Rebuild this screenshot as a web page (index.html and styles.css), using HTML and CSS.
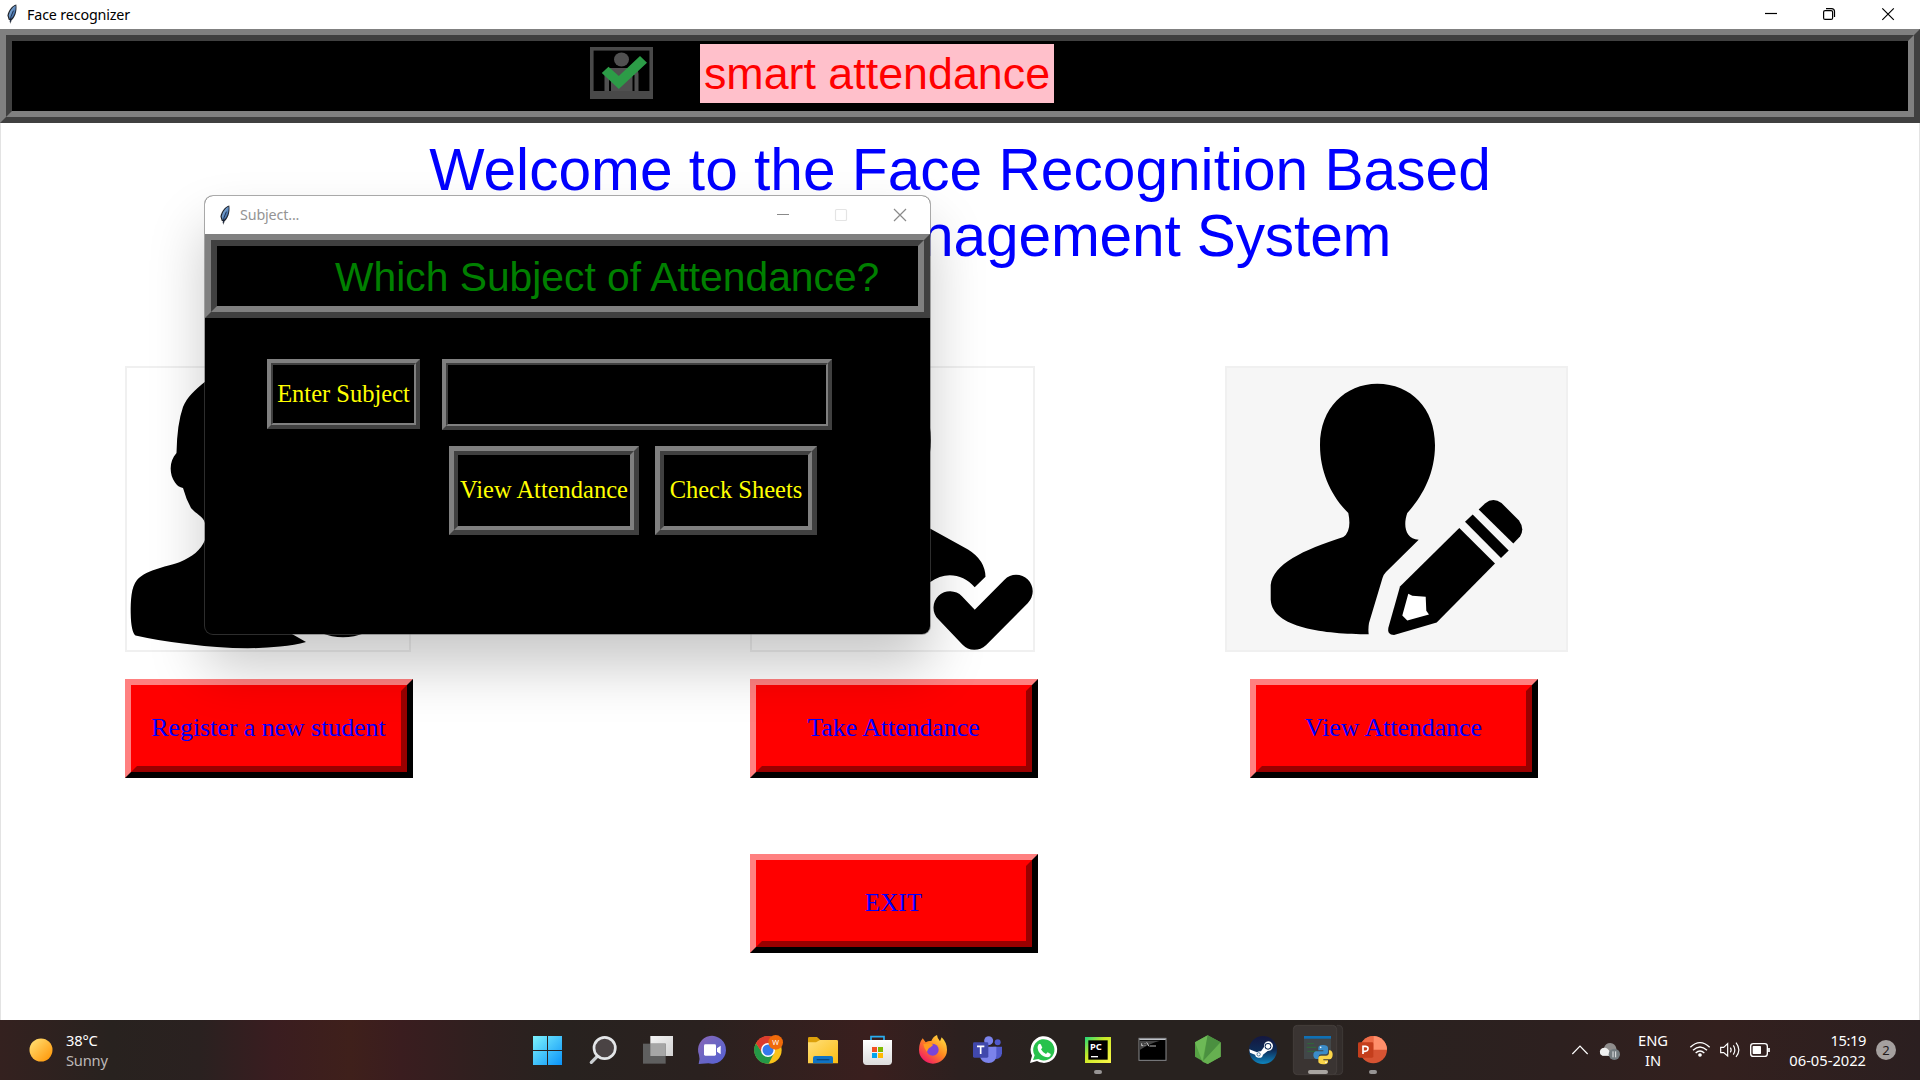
FILE: index.html
```
<!DOCTYPE html>
<html lang="en">
<head>
<meta charset="utf-8">
<title>Face recognizer</title>
<link rel="stylesheet" href="styles.css">
</head>
<body>
<svg width="0" height="0" class="defs" aria-hidden="true">
  <defs>
    <linearGradient id="win" x1="0" y1="0" x2="1" y2="1"><stop offset="0" stop-color="#7df3fd"/><stop offset="1" stop-color="#0a93f8"/></linearGradient>
    <linearGradient id="feather-fill" x1="0" y1="0" x2="1" y2="1"><stop offset="0" stop-color="#a6cdf0"/><stop offset="1" stop-color="#1f4f93"/></linearGradient>
    <linearGradient id="sun" x1="0" y1="0" x2="1" y2="1"><stop offset="0" stop-color="#ffe47a"/><stop offset="1" stop-color="#ff9100"/></linearGradient>
    <linearGradient id="chat" x1="0" y1="0" x2="1" y2="1"><stop offset="0" stop-color="#8b66b8"/><stop offset=".5" stop-color="#6a66c4"/><stop offset="1" stop-color="#5560d8"/></linearGradient>
    <linearGradient id="folder" x1="0" y1="0" x2="1" y2="1"><stop offset="0" stop-color="#ffdf7a"/><stop offset="1" stop-color="#fbbd12"/></linearGradient>
    <linearGradient id="fox" x1="1" y1="0" x2=".2" y2="1"><stop offset="0" stop-color="#fff04a"/><stop offset=".5" stop-color="#ff8a1f"/><stop offset="1" stop-color="#f0106c"/></linearGradient>
    <linearGradient id="steam" x1="0" y1="0" x2="0" y2="1"><stop offset="0" stop-color="#14173f"/><stop offset=".5" stop-color="#0e2a55"/><stop offset="1" stop-color="#0e86c0"/></linearGradient>
    <linearGradient id="pycharm" x1="0" y1="0" x2="1" y2="1"><stop offset="0" stop-color="#1fd97c"/><stop offset=".4" stop-color="#c8e825"/><stop offset="1" stop-color="#fcf84a"/></linearGradient>
    <linearGradient id="bag" x1="0" y1="0" x2="0" y2="1"><stop offset="0" stop-color="#ffffff"/><stop offset="1" stop-color="#dcdcdc"/></linearGradient>
    <linearGradient id="pane" x1="0" y1="0" x2="1" y2="1"><stop offset="0" stop-color="#f4f4f4"/><stop offset="1" stop-color="#d2d2d2"/></linearGradient>
    <symbol id="feather" viewBox="0 0 12 22">
      <path d="M10.500 .5C6 1.500 2.400 6.500 1.200 12L2.500 16.500 4 17 4.500 21 5.500 17C9 14.500 11.500 8 10.500 .5Z" fill="#20242c"/>
      <path d="M9.800 1.500C6.500 3 3.500 7.500 2.500 12L3.500 15.500 5 15.500C8.200 13 10.300 7 9.800 1.500Z" fill="url(#feather-fill)"/>
      <path d="M4 19L5 13 7.500 7" fill="none" stroke="#14213a" stroke-width=".9"/>
    </symbol>
  </defs>
</svg>

<div class="desktop">
  <div class="titlebar">
    <svg class="feather"><use href="#feather"/></svg>
    <span class="title-text">Face recognizer</span>
    <svg class="win-controls" viewBox="0 0 180 29" width="180" height="29" fill="none" stroke="#000" stroke-width="1.200">
      <path d="M25 13.500h12"/>
      <rect x="83.600" y="10.600" width="9" height="8.800" rx="1.500"/>
      <path d="M86 8.600h5.500a3 3 0 0 1 3 3V17"/>
      <path d="M142.300 8.300l11.500 11.500M153.800 8.300l-11.500 11.500"/>
    </svg>
  </div>

  <div class="ridge banner">
    <div class="ridge-inner">
      <svg class="logo" viewBox="0 0 63 52">
        <rect x="1.800" y="1.800" width="59.400" height="48.400" fill="none" stroke="#494949" stroke-width="3.600"/>
        <rect x="2" y="44" width="59" height="7" fill="#494949"/>
        <ellipse cx="31.500" cy="12.500" rx="7.500" ry="7" fill="#505050"/>
        <path d="M14.500 44V27Q14.500 21 20 21H42Q48.500 21 48.500 27V44H44.500V28H42.500V44H21V28H19V44Z" fill="#505050"/>
        <path d="M11.800 26L18.500 19.800 28.800 29 50 9 57 15.800 28.800 42Z" fill="#2c9c47"/>
      </svg>
      <div class="brand">smart attendance</div>
    </div>
  </div>

  <main class="content">
    <h1 class="welcome">Welcome to the Face Recognition Based<br><span class="welcome-second">Attendance Management System</span></h1>

    <div class="cards">
      <div class="card">
        <svg class="photo" viewBox="0 0 286 286" width="286" height="286">
          <path d="M200 60C180 0 110 -5 80 15.700C70 24 62 31 58 41Q52 58 51.500 87C44 95 44 108 50 116.500Q53 121 58 122Q61 133 66 142C71 148 78 150 80 157V174C76 184 67 191 55 196C45 200 22 203 12 214C6 221 5.700 235 5.700 247Q6 266 10.500 269.500Q35 275 58 277.500Q115 285 155 280.500Q170 279 181 276L167 268 200 200Z"/>
          <path d="M196 267Q218 275.500 240 267L218 240Z"/>
        </svg>
        <button class="big-button"><span>Register a new student</span></button>
      </div>
      <div class="card take">
        <svg class="photo" viewBox="0 0 285 286" width="285" height="286">
          <ellipse cx="120" cy="74" rx="61" ry="68"/>
          <path d="M30 200L150 146 180 162.500 218 183.500Q235 194 235.500 210.700L224.700 221.300C213 208 195 205 180 216.300L150 240H30Z"/>
          <path d="M200 241.700L224.500 267.300 266.200 225.300" fill="none" stroke="#000" stroke-width="33" stroke-linecap="round" stroke-linejoin="round"/>
        </svg>
        <button class="big-button"><span>Take Attendance</span></button>
      </div>
      <div class="card view">
        <svg class="photo grey" viewBox="0 0 343 286" width="343" height="286">
          <path d="M152.300 17.700C186 18 210 42 210 79.300C210 108 197 131 182.300 147C178 159 180 173 193.700 173.700L161 206Q158.500 208.500 157.500 212L144 257Q143 263 143.700 268.300C100 268 47 262 45.700 233.700V219C48 198 78 184 118.300 171Q127 165 123.300 147C106 130 95 106 95 79.300C95 42 120 18 152.300 17.700Z"/>
          <path d="M234.300 162L270 197.400 211.700 256.400 169 269Q162 269 163.300 262L175 220.400Z"/>
          <path d="M183.300 227.700L177.300 249.400 182.300 254.400 204 248.400 201.300 244.700 200.700 230.700 187.300 229.700Z" fill="#fff"/>
          <path d="M247.700 148.400L283.700 184.400 276 192 240 155.700Z"/>
          <path d="M253.700 143.400L260 137.500Q268 131 276.500 137L294 154.500Q300 163 295 170.400L288.300 177.400Z"/>
        </svg>
        <button class="big-button"><span>View Attendance</span></button>
      </div>
    </div>
    <button class="big-button exit"><span>EXIT</span></button>
  </main>

  <footer class="taskbar">
    <div class="weather">
      <svg width="24" height="24" viewBox="0 0 24 24"><circle cx="12" cy="12" r="11.500" fill="url(#sun)"/></svg>
      <div class="weather-text"><div>38°C</div><div class="muted">Sunny</div></div>
    </div>
    <div class="apps">
      <svg viewBox="60 30 165 180"><path d="M99 78h42v42H99zM144 78h42v42h-42zM99 123h42v42H99zM144 123h42v42h-42z" fill="url(#win)"/></svg>
      <svg viewBox="225 30 165 180"><path d="M274 157L291 140" stroke="#c9cdd0" stroke-width="10" stroke-linecap="round"/><circle cx="314" cy="114" r="32" fill="#4a4344" stroke="#e4e6e8" stroke-width="8"/></svg>
      <svg viewBox="390 30 165 180"><rect x="451" y="78" width="68" height="60" fill="url(#pane)"/><rect x="429" y="101" width="68" height="60" fill="#5f5f5f"/><rect x="451" y="101" width="46" height="37" fill="#a6a6a6"/></svg>
      <svg viewBox="555 30 165 180"><path d="M596 162Q601 148 597 135A42 42 0 1 1 625 160Z" fill="url(#chat)"/><rect x="612" y="103" width="36" height="34" rx="4" fill="#fff"/><path d="M651 115L662 107V133L651 125Z" fill="#fff"/></svg>
      <svg viewBox="720 30 165 180"><circle cx="804" cy="120" r="41" fill="#f9c21a"/><path d="M768 99.500A41 41 0 0 0 806 161L822 130 804 120 787 128Z" fill="#249847"/><path d="M768 99.500A41 41 0 0 1 840 99.500L842 104H804L787 130Z" fill="#dc3b2e"/><circle cx="804" cy="120" r="21" fill="#fff"/><circle cx="804" cy="120" r="16.500" fill="#3579ec"/><circle cx="827" cy="97" r="22" fill="#f06a0a"/><text x="827" y="105" class="w-badge">W</text></svg>
      <svg viewBox="885 30 165 180"><path d="M924 85Q924 81 928 81H951L961 90V104H924Z" fill="#dca00a"/><path d="M924 97H948L960 90H1010Q1014 90 1014 94V160H924Z" fill="url(#folder)"/><path d="M939 160V144Q939 138 945 138H993Q999 138 999 144V160Z" fill="#0f73c4"/><path d="M950 149H988" stroke="#07477f" stroke-width="4"/></svg>
      <svg viewBox="1050 30 165 180"><path d="M1113 94V80H1152V94" fill="none" stroke="#29aef0" stroke-width="5"/><path d="M1089 90H1176V154Q1176 165 1165 165H1100Q1089 165 1089 154Z" fill="url(#bag)"/><path d="M1116 111h15v15h-15z" fill="#f25022"/><path d="M1134 111h15v15h-15z" fill="#7fba00"/><path d="M1116 129h15v15h-15z" fill="#00a4ef"/><path d="M1134 129h15v15h-15z" fill="#ffb900"/></svg>
      <svg viewBox="1215 30 165 180"><path d="M1268 85L1277 97Q1286 92 1294 93 1299 80 1311 75 1312 86 1320 94L1325 82Q1341 98 1341 119A42 42 0 0 1 1257 119Q1257 99 1268 85Z" fill="url(#fox)"/><circle cx="1298" cy="119" r="18" fill="#7a44d8"/><path d="M1270 103Q1286 97 1300 104L1292 112Q1284 114 1281 126 1272 116 1270 103Z" fill="#ff9a1e"/></svg>
      <svg viewBox="60 30 165 180"><circle cx="146" cy="92" r="13.500" fill="#7b83eb"/><circle cx="173" cy="97" r="9" fill="#5059c9"/><path d="M160 110H186V130Q184 146 168 147H160Z" fill="#5059c9"/><path d="M120 110H169V138Q167 158 146 159 124 158 120 140Z" fill="#7b83eb"/><rect x="99" y="97" width="46" height="46" rx="4" fill="#4048ac"/><path d="M111 109H133M122 109V132" stroke="#fff" stroke-width="5"/></svg>
      <svg viewBox="225 30 165 180"><path d="M270 159L276 137A40 40 0 1 1 291 153Z" fill="#fff"/><path d="M279 150L284 136A32 32 0 1 1 295 147Z" fill="#27c24c"/><path d="M296 103Q300 99 303 104L307 113 303 118Q308 128 318 132L323 127 332 132Q333 139 324 142 310 142 299 129 288 114 296 103Z" fill="#fff"/></svg>
      <svg viewBox="390 30 165 180"><rect x="435" y="81" width="78" height="78" fill="url(#pycharm)"/><rect x="445" y="91" width="58" height="58" fill="#000"/><text x="450" y="119" class="pc-letters">PC</text><path d="M453 140H474" stroke="#fff" stroke-width="4"/><rect x="462" y="180" width="24" height="12" rx="6" fill="#979494"/></svg>
      <svg viewBox="555 30 165 180"><rect x="597" y="85" width="81" height="66" fill="#000" stroke="#87898c" stroke-width="3"/><path d="M598 88H677" stroke="#bfc3c8" stroke-width="4"/><path d="M599 92H660Q625 102 599 120Z" fill="#434343"/><path d="M605 100V107H610M615 99V101M615 105V107M620 97L627 109M629 108H648" fill="none" stroke="#ddd" stroke-width="2.500"/></svg>
      <svg viewBox="720 30 165 180"><path d="M803 76L842 97V140L803 162 765 140V97Z" fill="#56a244"/><path d="M803 76L765 97 787 155Z" fill="#6db956"/><path d="M803 76L842 97 790 155Z" fill="#4b9040"/><path d="M842 97V140L803 162 787 155Z" fill="#66b050"/></svg>
      <svg viewBox="885 30 165 180"><circle cx="969" cy="120" r="42" fill="url(#steam)"/><path d="M928 118L951 127Q957 123 963 124L972 111Q971 95 985 94 999 95 999 109 998 122 983 123L969 134Q966 146 954 143 946 141 945 134L930 128Z" fill="#fff"/><circle cx="984" cy="109" r="10" fill="#0e2a55"/><circle cx="984" cy="109" r="7" fill="#fff"/><circle cx="956" cy="133" r="5" fill="none" stroke="#174c78" stroke-width="2"/></svg>
      <svg viewBox="1050 30 165 180"><path d="M1190 46H1196Q1208 46 1208 58V182Q1208 194 1196 194H1182" fill="#332d2b" stroke="#474140" stroke-width="2"/><rect x="1060" y="46" width="130" height="148" rx="12" fill="#3a3432" stroke="#4b4543" stroke-width="2"/><rect x="1092" y="78" width="81" height="69" fill="#424749"/><path d="M1092 82H1173" stroke="#0f70b5" stroke-width="8"/><path d="M1102 101H1122M1100 112H1128M1102 124H1130" stroke="#2f6a38" stroke-width="3"/><path d="M1150 105Q1136 104 1135 113V121H1150V124H1129Q1120 125 1120 136 1121 147 1130 147H1136V139Q1136 133 1144 133H1158Q1164 132 1164 126V113Q1163 105 1150 105Z" fill="#3b8cc8"/><path d="M1149 163Q1134 162 1135 154V145Q1135 137 1143 137H1158Q1167 136 1167 128V121H1170Q1178 123 1178 134 1177 147 1169 148H1150V151H1164V156Q1163 163 1149 163Z" fill="#fbd548"/><circle cx="1142" cy="112" r="2.500" fill="#fff"/><circle cx="1158" cy="157" r="2.500" fill="#fff"/><rect x="1104" y="180" width="60" height="12" rx="6" fill="#a9a5a1"/></svg>
      <svg viewBox="1215 30 165 180"><circle cx="1300" cy="119" r="41" fill="#d65332"/><path d="M1300 78A41 41 0 0 1 1341 119H1300Z" fill="#ff8f6b"/><path d="M1300 78V119H1259A41 41 0 0 1 1300 78Z" fill="#ed6c47"/><rect x="1254" y="97" width="46" height="46" rx="4" fill="#c43e1c"/><path d="M1269 132V109H1277Q1285 110 1284 117 1283 124 1275 124H1269" fill="none" stroke="#fff" stroke-width="5"/><rect x="1287" y="180" width="24" height="12" rx="6" fill="#979494"/></svg>
    </div>
    <div class="tray">
      <svg viewBox="75 30 180 180" width="60" height="60"><path d="M97 132L120 108 143 132" fill="none" stroke="#fff" stroke-width="3.500"/><path d="M188 137Q179 135 180 124 182 115 192 114 196 99 211 99 225 100 229 115V137Z" fill="#8f8d8c"/><path d="M188 137Q179 135 180 124 182 112 196 113 207 115 214 137Z" fill="#f0f0f0"/><circle cx="223" cy="133" r="17" fill="#747c80"/><path d="M219 124V142M227 124V142" stroke="#fff" stroke-width="2.500"/></svg>
      <div class="lang"><div>ENG</div><div>IN</div></div>
      <svg viewBox="423 30 282 180" width="94" height="60" fill="none" stroke="#fff" stroke-width="4"><path d="M451 112Q480 84 509 112M459 121Q480 101 501 121M467 129Q480 117 493 129"/><circle cx="480" cy="135" r="3.500" fill="#fff"/><path d="M542 112H551L563 101V138L551 128H542Z" stroke-width="3.500"/><path d="M571 113Q576 120 571 127M580 106Q589 120 580 134M588 98Q605 120 588 141" stroke-width="3.500"/><rect x="632" y="101" width="50" height="38" rx="8"/><rect x="638" y="108" width="25" height="24" rx="2" fill="#fff" stroke="none"/><path d="M687 114V126" stroke-width="5"/></svg>
      <div class="clock"><div>15:19</div><div class="date">06-05-2022</div></div>
      <div class="notify">2</div>
    </div>
  </footer>

  <section class="dialog">
    <div class="dialog-title">
      <svg class="feather"><use href="#feather"/></svg>
      <span class="title-text">Subject...</span>
      <svg class="win-controls" viewBox="0 0 180 38" width="180" height="38" fill="none" stroke="#8a8a8a" stroke-width="1.200">
        <path d="M27 18.500h12"/>
        <rect x="85.500" y="13.500" width="11" height="11" rx="1" stroke="#e4e4e4"/>
        <path d="M144 13l12 12M156 13l-12 12"/>
      </svg>
    </div>
    <div class="ridge question"><div class="ridge-inner">Which Subject of Attendance?</div></div>
    <div class="form-row">
      <div class="ridge thin enter"><div class="ridge-inner">Enter Subject</div></div>
      <div class="ridge thin entry"><div class="ridge-inner"></div></div>
    </div>
    <div class="form-row actions">
      <div class="ridge medium view-btn"><div class="ridge-inner">View Attendance</div></div>
      <div class="ridge medium check-btn"><div class="ridge-inner">Check Sheets</div></div>
    </div>
  </section>
</div>
</body>
</html>
```
FILE: styles.css
```
* { box-sizing: border-box; }

body { margin: 0; overflow: hidden; }

.defs { position: absolute; }

.desktop {
  position: relative;
  display: flex;
  flex-direction: column;
  width: 1920px;
  height: 1080px;
  background: #fff;
  font-family: "Noto Sans", "Open Sans", sans-serif;
}

.titlebar,
.dialog-title {
  display: flex;
  align-items: center;
  flex: none;
  background: #fff;
}

.titlebar { height: 29px; padding-left: 6px; }

.feather { width: 12px; height: 21px; flex: none; }

.title-text {
  margin-left: 9px;
  font-size: 14.3px;
  letter-spacing: -0.15px;
  white-space: nowrap;
  color: #000;
}

.win-controls { margin-left: auto; }

/* Raised groove frame: light outer edge, dark inner edge */
.ridge {
  display: flex;
  border: 6px solid;
  border-color: #808080 #404040 #404040 #808080;
  background: #000;
}

.ridge-inner {
  display: flex;
  align-items: center;
  flex: 1;
  border: 6px solid;
  border-color: #404040 #808080 #808080 #404040;
  white-space: nowrap;
}

.thin { border-width: 4px; }
.thin > .ridge-inner { border-width: 2px; }
.medium { border-width: 5px; }
.medium > .ridge-inner { border-width: 4px; padding-bottom: 2px; }

.banner { flex: none; height: 94px; }
.banner > .ridge-inner { padding-left: 578px; align-items: flex-start; }

.logo { width: 63px; height: 52px; margin-top: 6px; }

.brand {
  width: 354px;
  height: 59px;
  margin: 3px 0 0 47px;
  background: #ffc0cb;
  color: #f00;
  font: 44.8px/59px "Liberation Sans", Arial, sans-serif;
  text-align: center;
}

.content {
  flex: 1;
  border: solid #e3e3e3;
  border-width: 0 1px;
}

.welcome {
  margin: 0;
  padding-top: 14px;
  color: #00f;
  font: 58.65px/66px "Liberation Sans", Arial, sans-serif;
  text-align: center;
}

.welcome-second { letter-spacing: -0.16px; }

.cards { display: flex; padding: 97px 0 0 124px; }

.card { width: 288px; }
.card.take { margin-left: 337px; }
.card.view { width: 343px; margin-left: 187px; }
.card.view .big-button { margin-left: 25px; }

.photo { display: block; outline: 2px solid #f0f0f0; outline-offset: -2px; }
.grey { background: #f6f6f6; }

.big-button {
  display: flex;
  width: 288px;
  height: 99px;
  margin: 27px 0 0;
  padding: 0;
  border: 6px solid;
  border-color: #ff8080 #000 #000 #ff8080;
  border-radius: 0;
  background: #f00;
  color: #00f;
  font: 25.8px "Liberation Serif", "Times New Roman", serif;
}

.big-button span {
  display: flex;
  align-items: center;
  justify-content: center;
  align-self: stretch;
  flex: 1;
  padding: 0 1px 2px 0;
  border: 6px solid;
  border-color: #f00 #900 #900 #f00;
}

.exit { margin: 76px 0 0 749px; }
.exit span { font-size: 25px; }

.taskbar {
  display: flex;
  flex: none;
  height: 60px;
  background: linear-gradient(90deg, #34211f 0, #28221f 110px, #2a2120 200px, #3a1d20 275px, #3f201b 350px, #3a1d1f 400px, #2e201f 490px, #28221f 560px, #2a211f 700px, #3a1f1e 870px, #2c201f 960px, #28221f 1050px, #28221f 1300px, #2d201f 1560px, #33201e 1720px, #2b1f20 1920px);
  color: #fff;
  font-size: 14.7px;
  line-height: 20px;
}

.weather { display: flex; align-items: center; width: 520px; padding-left: 29px; }
.weather-text { margin-left: 13px; letter-spacing: -0.2px; }
.muted { color: #bdb8b7; }

.apps { display: flex; }
.apps svg { width: 55px; height: 60px; }

.w-badge { fill: #fff; font: 22px "Noto Sans", sans-serif; text-anchor: middle; }
.pc-letters { fill: #fff; font: bold 28px "Noto Sans", sans-serif; }

.tray { display: flex; align-items: center; margin-left: 165px; }
.lang { width: 56px; text-align: center; }
.clock { width: 91px; text-align: right; letter-spacing: -0.4px; }
.date { letter-spacing: 0; }

.notify {
  width: 20px;
  height: 20px;
  margin-left: 10px;
  border-radius: 50%;
  background: #a5a09f;
  color: #221a1a;
  font-size: 13px;
  text-align: center;
}

/* Floating tool window over the main one */
.dialog {
  position: absolute;
  left: 205px;
  top: 196px;
  width: 725px;
  height: 438px;
  overflow: hidden;
  border-radius: 8px;
  background: #000;
  box-shadow: 0 0 0 1px rgba(90, 90, 90, 0.5), 0 32px 56px rgba(0, 0, 0, 0.22);
}

.dialog-title { height: 38px; padding-left: 14px; }
.dialog-title .title-text { padding-bottom: 2px; color: #949494; }

.question { height: 84px; }
.question > .ridge-inner {
  padding: 2px 0 0 118px;
  color: #008000;
  font: 40.8px "Liberation Sans", Arial, sans-serif;
}

.form-row {
  display: flex;
  gap: 22px;
  padding: 41px 0 0 62px;
  color: #ff0;
  font: 24.5px "Liberation Serif", "Times New Roman", serif;
}

.form-row .ridge-inner { justify-content: center; }
.enter { width: 153px; height: 70px; }
.entry { width: 390px; height: 71px; }
.actions { gap: 16px; padding: 16px 0 0 244px; }
.view-btn { width: 190px; height: 89px; }
.check-btn { width: 162px; height: 89px; }
```
